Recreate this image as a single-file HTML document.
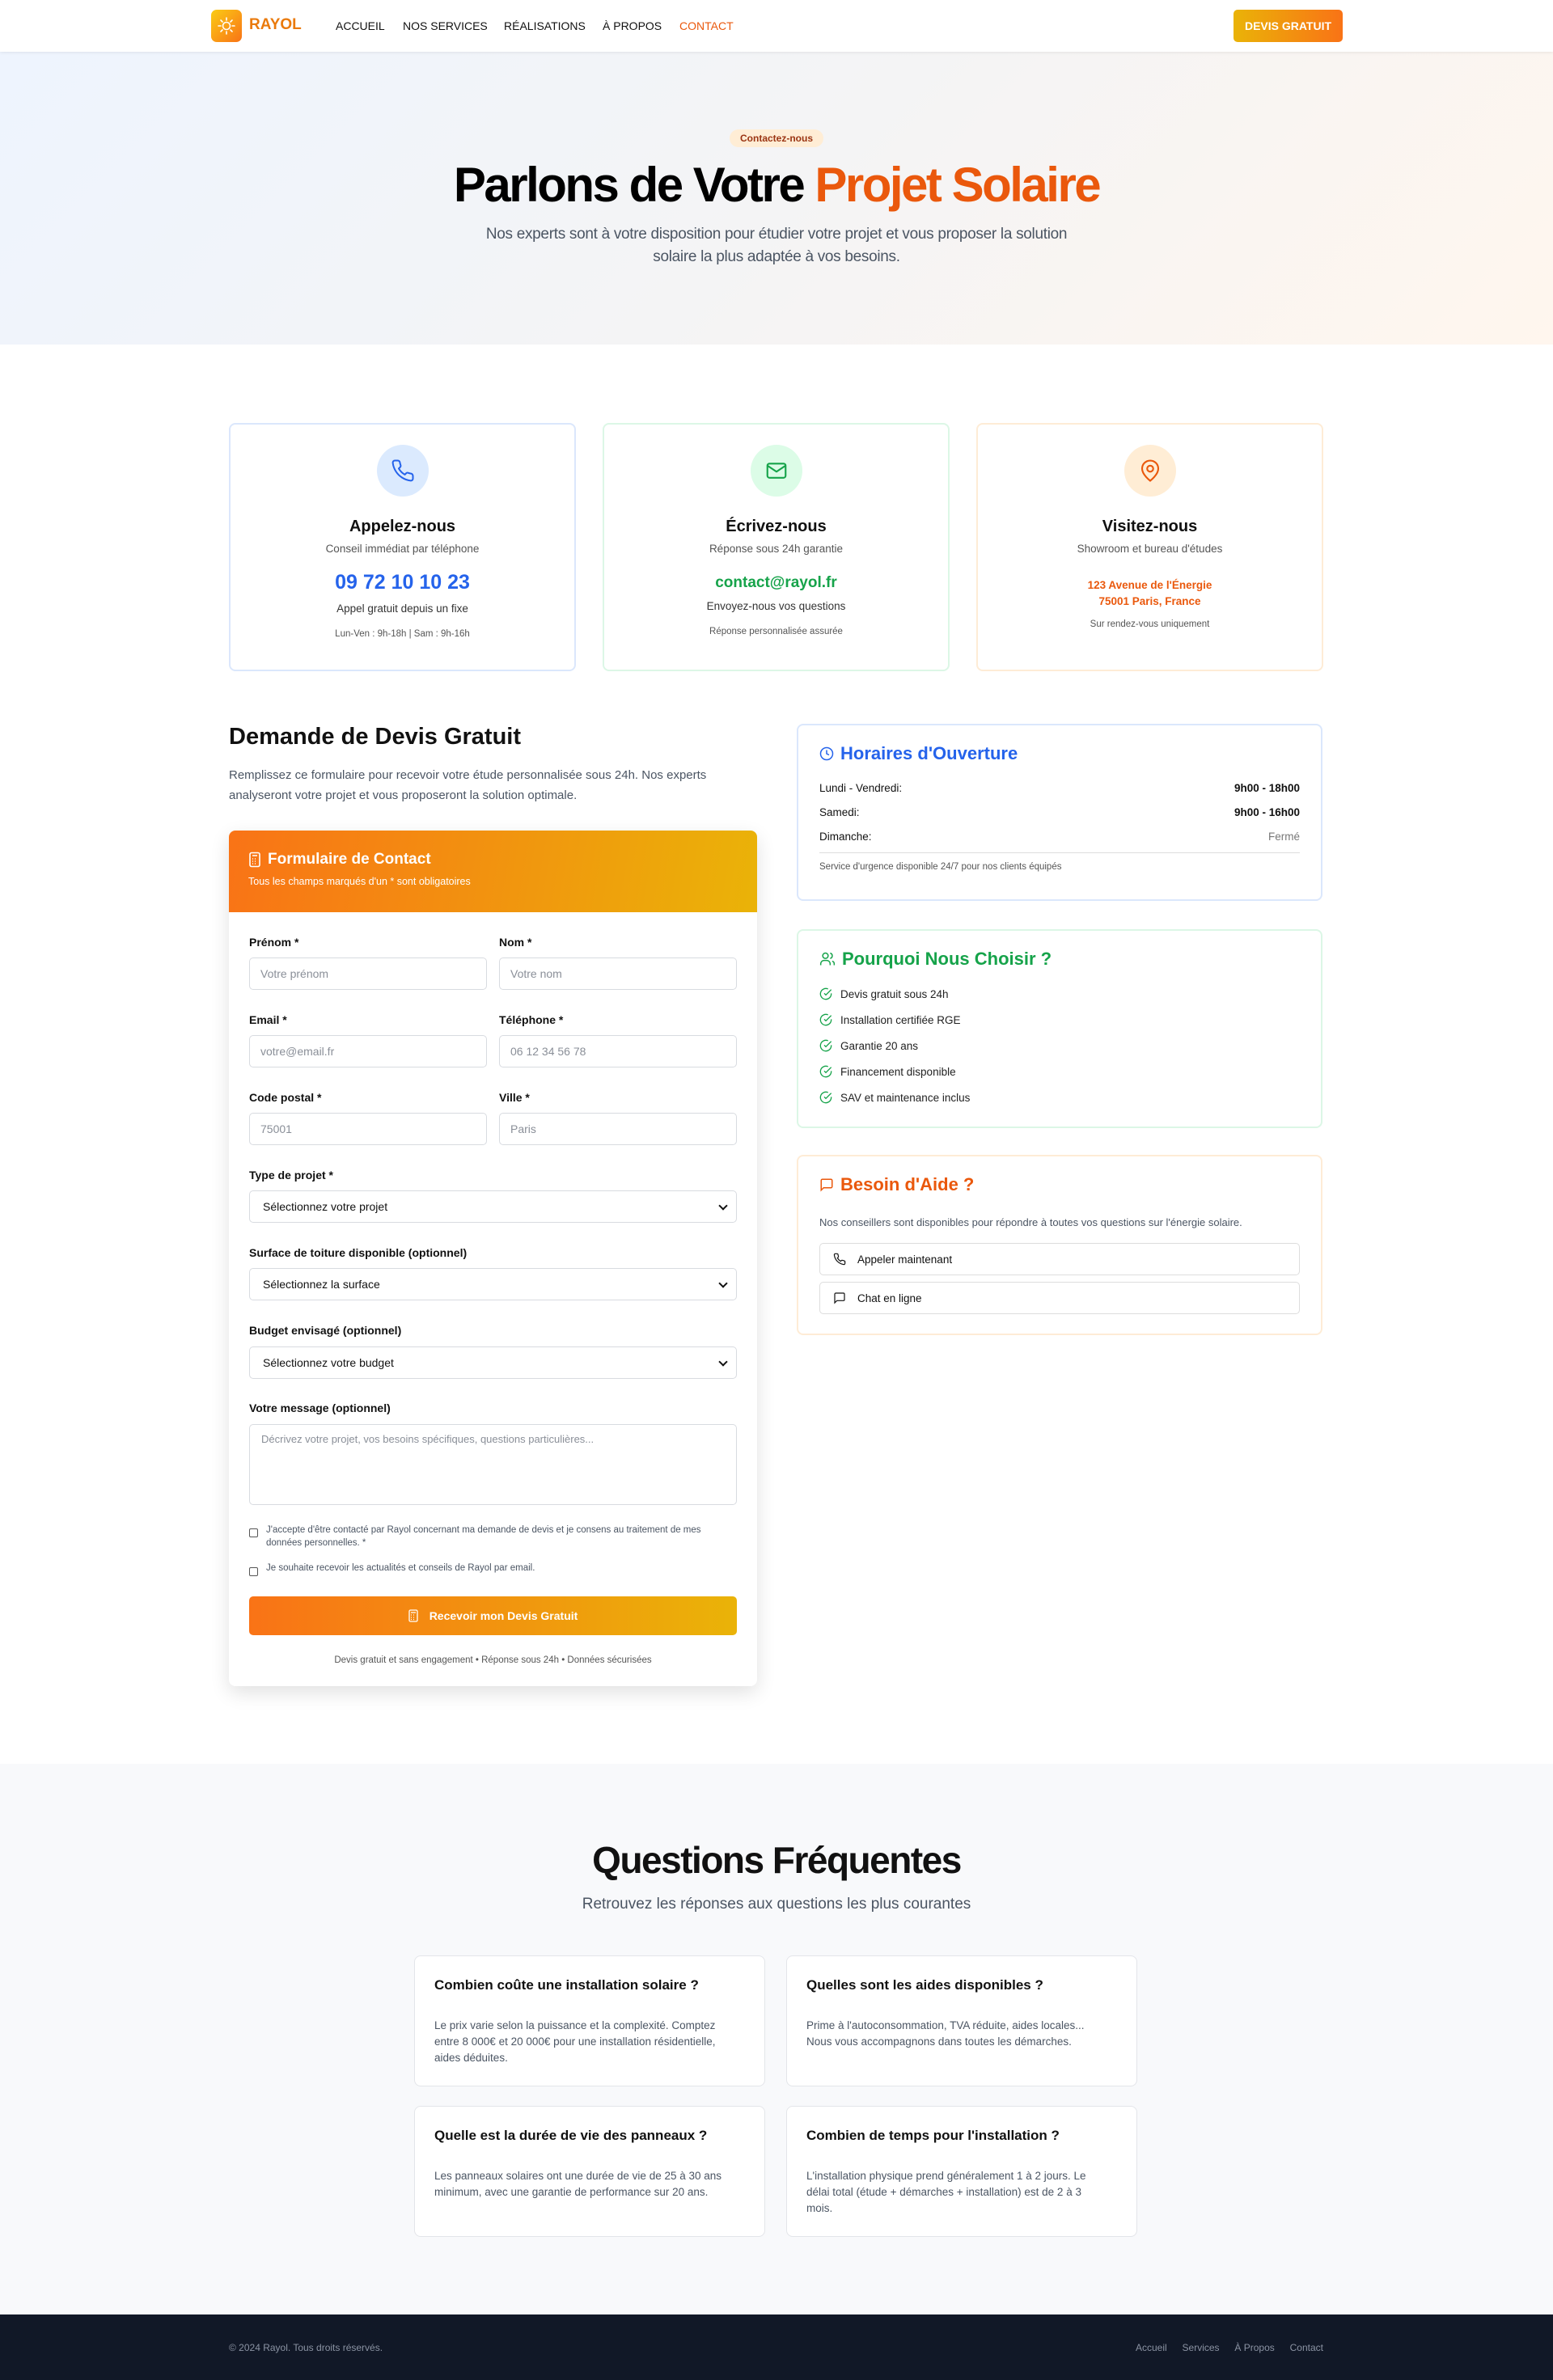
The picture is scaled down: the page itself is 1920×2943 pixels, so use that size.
<!DOCTYPE html>
<html><head><meta charset="utf-8"><style>
*{box-sizing:border-box;margin:0;padding:0}
body{width:1920px;height:2943px;position:relative;font-family:"Liberation Sans",sans-serif;color:#111;background:#fff;overflow:hidden}
.a{position:absolute}
.nav{left:0;top:0;width:1920px;height:64px;background:#fff;box-shadow:0 1px 4px rgba(0,0,0,.08);z-index:2}
.navi{top:24px;font-size:14px;font-weight:500;color:#111}
.hero{left:0;top:64px;width:1920px;height:362px;background:linear-gradient(135deg,#eef4fe 0%,#f4f4f5 50%,#fff6ee 100%)}
.c{text-align:center}
.card{border:2px solid;border-radius:8px;background:#fff}
.ic{width:64px;height:64px;border-radius:50%;display:flex;align-items:center;justify-content:center}
.lbl{font-size:14px;font-weight:600;color:#111}
.inp{height:40px;border:1px solid #d8dbe0;border-radius:5px;font-size:14px;color:#8a8f98;padding:11px 13px;background:#fff}
.sel{height:40px;border:1px solid #d8dbe0;border-radius:5px;font-size:14px;color:#111;padding:11px 16px;background:#fff}
.sel:after{content:"";position:absolute;right:12px;top:14px;width:6px;height:6px;border-right:2px solid #111;border-bottom:2px solid #111;transform:rotate(45deg)}
.rc{border:2px solid;border-radius:8px;background:#fff;left:985px;width:650px}
.faq{background:#fff;border:1px solid #e3e5e9;border-radius:8px;width:434px;height:162px;padding:26px 24px}
.faq h4{font-size:17px;font-weight:600;margin-bottom:30px}
.faq p{font-size:13.5px;line-height:20px;color:#4b5563;width:370px}
.li{font-size:13.5px;color:#222;height:32px;display:flex;align-items:center;gap:10px}
</style></head><body>
<div class="a nav">
  <div class="a" style="left:261px;top:12px;width:38px;height:40px;border-radius:7px;background:linear-gradient(135deg,#facc15,#f97316)">
    <svg width="38" height="40" viewBox="0 0 38 40"><g stroke="#fff" stroke-width="1.6" fill="none" stroke-linecap="round"><circle cx="19" cy="20" r="4.5"/><path d="M19 10v3M19 27v3M9 20h3M26 20h3M12 13l2 2M24 25l2 2M12 27l2-2M24 15l2-2"/></g></svg>
  </div>
  <div class="a" style="left:308px;top:20px;font-size:19px;font-weight:700;color:#ea7a0c">RAYOL</div>
  <div class="a navi" style="left:415px">ACCUEIL</div>
  <div class="a navi" style="left:498px">NOS SERVICES</div>
  <div class="a navi" style="left:623px">RÉALISATIONS</div>
  <div class="a navi" style="left:745px">À PROPOS</div>
  <div class="a navi" style="left:840px;color:#ea580c">CONTACT</div>
  <div class="a" style="left:1525px;top:12px;width:135px;height:40px;border-radius:5px;background:linear-gradient(90deg,#eab308,#f97316);color:#fff;font-size:14px;font-weight:700;text-align:center;line-height:40px">DEVIS GRATUIT</div>
</div>
<div class="a hero"></div>
<div class="a" style="left:902px;top:160px;width:116px;height:22px;border-radius:11px;background:#ffedd5;color:#9a3412;font-size:12px;font-weight:600;text-align:center;line-height:22px">Contactez-nous</div>
<div class="a c" style="left:0;width:1920px;top:194px;font-size:60px;font-weight:700;letter-spacing:-2.5px;color:#000">Parlons de Votre <span style="color:#ea580c">Projet Solaire</span></div>
<div class="a c" style="left:575px;width:770px;top:276px;font-size:19px;line-height:28px;color:#4b5563;letter-spacing:-0.3px">Nos experts sont à votre disposition pour étudier votre projet et vous proposer la solution solaire la plus adaptée à vos besoins.</div>

<div class="a card c" style="left:283px;top:523px;width:429px;height:307px;border-color:#dbe7fc">
  <div class="ic" style="background:#dbeafe;margin:25px auto 0"><svg width="30" height="30" viewBox="0 0 24 24" fill="none" stroke="#2563eb" stroke-width="1.6" stroke-linecap="round" stroke-linejoin="round"><path d="M22 16.9v3a2 2 0 0 1-2.2 2 19.8 19.8 0 0 1-8.6-3.1 19.5 19.5 0 0 1-6-6A19.8 19.8 0 0 1 2.1 4.2 2 2 0 0 1 4.1 2h3a2 2 0 0 1 2 1.7c.1 1 .4 1.9.7 2.8a2 2 0 0 1-.5 2.1L8 9.9a16 16 0 0 0 6 6l1.3-1.3a2 2 0 0 1 2.1-.4c.9.3 1.8.6 2.8.7a2 2 0 0 1 1.7 2z"/></svg></div>
  <div style="font-size:20px;font-weight:600;margin-top:26px">Appelez-nous</div>
  <div style="font-size:13.5px;color:#555;margin-top:8px">Conseil immédiat par téléphone</div>
  <div style="font-size:25px;font-weight:700;color:#2563eb;margin-top:20px">09 72 10 10 23</div>
  <div style="font-size:13.5px;color:#333;margin-top:10px">Appel gratuit depuis un fixe</div>
  <div style="font-size:11.5px;color:#555;margin-top:18px">Lun-Ven : 9h-18h | Sam : 9h-16h</div>
</div>
<div class="a card c" style="left:745px;top:523px;width:429px;height:307px;border-color:#dcf7e6">
  <div class="ic" style="background:#dcfce7;margin:25px auto 0"><svg width="30" height="30" viewBox="0 0 24 24" fill="none" stroke="#16a34a" stroke-width="1.7" stroke-linejoin="round"><rect x="3" y="5" width="18" height="14" rx="2"/><path d="M3 7l9 6 9-6"/></svg></div>
  <div style="font-size:20px;font-weight:600;margin-top:26px">Écrivez-nous</div>
  <div style="font-size:13.5px;color:#555;margin-top:8px">Réponse sous 24h garantie</div>
  <div style="font-size:19px;font-weight:600;color:#16a34a;margin-top:24px">contact@rayol.fr</div>
  <div style="font-size:13.5px;color:#333;margin-top:10px">Envoyez-nous vos questions</div>
  <div style="font-size:11.5px;color:#555;margin-top:18px">Réponse personnalisée assurée</div>
</div>
<div class="a card c" style="left:1207px;top:523px;width:429px;height:307px;border-color:#feecd6">
  <div class="ic" style="background:#ffedd5;margin:25px auto 0"><svg width="30" height="30" viewBox="0 0 24 24" fill="none" stroke="#ea580c" stroke-width="1.7"><path d="M20 10c0 6-8 12-8 12S4 16 4 10a8 8 0 0 1 16 0z"/><circle cx="12" cy="10" r="3"/></svg></div>
  <div style="font-size:20px;font-weight:600;margin-top:26px">Visitez-nous</div>
  <div style="font-size:13.5px;color:#555;margin-top:8px">Showroom et bureau d'études</div>
  <div style="font-size:13.5px;font-weight:600;color:#ea580c;margin-top:28px;line-height:20px">123 Avenue de l'Énergie<br>75001 Paris, France</div>
  <div style="font-size:11.5px;color:#555;margin-top:12px">Sur rendez-vous uniquement</div>
</div>

<div class="a" style="left:283px;top:895px;font-size:29px;font-weight:700">Demande de Devis Gratuit</div>
<div class="a" style="left:283px;top:946px;width:600px;font-size:15px;line-height:25px;color:#4b5563">Remplissez ce formulaire pour recevoir votre étude personnalisée sous 24h. Nos experts analyseront votre projet et vous proposeront la solution optimale.</div>
<div class="a" style="left:283px;top:1027px;width:653px;height:1058px;border-radius:8px;background:#fff;box-shadow:0 8px 24px rgba(0,0,0,.12);overflow:hidden">
  <div style="height:101px;background:linear-gradient(100deg,#f97316,#eab308);padding:25px 24px;color:#fff">
    <div style="font-size:19px;font-weight:700;display:flex;align-items:center;gap:8px"><svg width="16" height="20" viewBox="0 0 16 20" fill="none" stroke="#fff" stroke-width="1.6"><rect x="2" y="1.5" width="12" height="17" rx="2"/><path d="M5 5h6M5 9h1M8 9h1M5 12h1M8 12h1M5 15h1M8 15h1"/></svg>Formulaire de Contact</div>
    <div style="font-size:12.5px;margin-top:9px">Tous les champs marqués d'un * sont obligatoires</div>
  </div>
</div>
<div class="a lbl" style="left:308px;top:1157px">Prénom *</div><div class="a lbl" style="left:617px;top:1157px">Nom *</div>
<div class="a inp" style="left:308px;top:1184px;width:294px">Votre prénom</div><div class="a inp" style="left:617px;top:1184px;width:294px">Votre nom</div>
<div class="a lbl" style="left:308px;top:1253px">Email *</div><div class="a lbl" style="left:617px;top:1253px">Téléphone *</div>
<div class="a inp" style="left:308px;top:1280px;width:294px">votre@email.fr</div><div class="a inp" style="left:617px;top:1280px;width:294px">06 12 34 56 78</div>
<div class="a lbl" style="left:308px;top:1349px">Code postal *</div><div class="a lbl" style="left:617px;top:1349px">Ville *</div>
<div class="a inp" style="left:308px;top:1376px;width:294px">75001</div><div class="a inp" style="left:617px;top:1376px;width:294px">Paris</div>
<div class="a lbl" style="left:308px;top:1445px">Type de projet *</div>
<div class="a sel" style="left:308px;top:1472px;width:603px">Sélectionnez votre projet</div>
<div class="a lbl" style="left:308px;top:1541px">Surface de toiture disponible (optionnel)</div>
<div class="a sel" style="left:308px;top:1568px;width:603px">Sélectionnez la surface</div>
<div class="a lbl" style="left:308px;top:1637px">Budget envisagé (optionnel)</div>
<div class="a sel" style="left:308px;top:1665px;width:603px">Sélectionnez votre budget</div>
<div class="a lbl" style="left:308px;top:1733px">Votre message (optionnel)</div>
<div class="a inp" style="left:308px;top:1761px;width:603px;height:100px;padding:10px 14px;font-size:13px">Décrivez votre projet, vos besoins spécifiques, questions particulières...</div>
<div class="a" style="left:308px;top:1890px;width:11px;height:11px;border:1px solid #555;border-radius:2px"></div>
<div class="a" style="left:329px;top:1884px;width:560px;font-size:11.5px;line-height:16px;color:#4b5563">J'accepte d'être contacté par Rayol concernant ma demande de devis et je consens au traitement de mes données personnelles. *</div>
<div class="a" style="left:308px;top:1938px;width:11px;height:11px;border:1px solid #555;border-radius:2px"></div>
<div class="a" style="left:329px;top:1933px;font-size:11.5px;color:#4b5563">Je souhaite recevoir les actualités et conseils de Rayol par email.</div>
<div class="a" style="left:308px;top:1974px;width:603px;height:48px;border-radius:5px;background:linear-gradient(90deg,#f97316,#eab308);color:#fff;font-size:14px;font-weight:700;display:flex;align-items:center;justify-content:center;gap:14px"><svg width="12" height="16" viewBox="0 0 12 16" fill="none" stroke="#fff" stroke-width="1.3"><rect x="1" y="1" width="10" height="14" rx="1.5"/><path d="M3 4h6M3 7h1M6 7h1M3 10h1M6 10h1M3 12.5h1M6 12.5h1"/></svg>Recevoir mon Devis Gratuit</div>
<div class="a c" style="left:283px;width:653px;top:2047px;font-size:11.5px;color:#555">Devis gratuit et sans engagement • Réponse sous 24h • Données sécurisées</div>

<div class="a rc" style="top:895px;height:219px;border-color:#dbe7fc;padding:22px 26px">
  <div style="font-size:22px;font-weight:600;color:#2563eb;display:flex;align-items:center;gap:8px"><svg width="18" height="18" viewBox="0 0 24 24" fill="none" stroke="#2563eb" stroke-width="2"><circle cx="12" cy="12" r="10"/><path d="M12 6v6l4 2"/></svg>Horaires d'Ouverture</div>
  <div style="display:flex;justify-content:space-between;font-size:13.5px;margin-top:22px"><span>Lundi - Vendredi:</span><b style="font-weight:600">9h00 - 18h00</b></div>
  <div style="display:flex;justify-content:space-between;font-size:13.5px;margin-top:15px"><span>Samedi:</span><b style="font-weight:600">9h00 - 16h00</b></div>
  <div style="display:flex;justify-content:space-between;font-size:13.5px;margin-top:15px"><span>Dimanche:</span><span style="color:#777">Fermé</span></div>
  <div style="border-top:1px solid #ddd;margin-top:12px;padding-top:11px;font-size:11.5px;color:#555">Service d'urgence disponible 24/7 pour nos clients équipés</div>
</div>
<div class="a rc" style="top:1149px;height:246px;border-color:#dcf7e6;padding:22px 26px">
  <div style="font-size:22px;font-weight:600;color:#16a34a;display:flex;align-items:center;gap:8px;margin-bottom:14px"><svg width="20" height="20" viewBox="0 0 24 24" fill="none" stroke="#16a34a" stroke-width="1.8"><circle cx="9" cy="7" r="4"/><path d="M2 21v-2a5 5 0 0 1 5-5h4a5 5 0 0 1 5 5v2M16 3.1a4 4 0 0 1 0 7.8M22 21v-2a4 4 0 0 0-3-3.9"/></svg>Pourquoi Nous Choisir ?</div>
  <div class="li"><svg width="16" height="16" viewBox="0 0 24 24" fill="none" stroke="#16a34a" stroke-width="2"><path d="M22 11.1V12a10 10 0 1 1-5.9-9.1"/><path d="M22 4L12 14l-3-3"/></svg>Devis gratuit sous 24h</div>
  <div class="li"><svg width="16" height="16" viewBox="0 0 24 24" fill="none" stroke="#16a34a" stroke-width="2"><path d="M22 11.1V12a10 10 0 1 1-5.9-9.1"/><path d="M22 4L12 14l-3-3"/></svg>Installation certifiée RGE</div>
  <div class="li"><svg width="16" height="16" viewBox="0 0 24 24" fill="none" stroke="#16a34a" stroke-width="2"><path d="M22 11.1V12a10 10 0 1 1-5.9-9.1"/><path d="M22 4L12 14l-3-3"/></svg>Garantie 20 ans</div>
  <div class="li"><svg width="16" height="16" viewBox="0 0 24 24" fill="none" stroke="#16a34a" stroke-width="2"><path d="M22 11.1V12a10 10 0 1 1-5.9-9.1"/><path d="M22 4L12 14l-3-3"/></svg>Financement disponible</div>
  <div class="li"><svg width="16" height="16" viewBox="0 0 24 24" fill="none" stroke="#16a34a" stroke-width="2"><path d="M22 11.1V12a10 10 0 1 1-5.9-9.1"/><path d="M22 4L12 14l-3-3"/></svg>SAV et maintenance inclus</div>
</div>
<div class="a rc" style="top:1428px;height:223px;border-color:#feecd6;padding:22px 26px">
  <div style="font-size:22px;font-weight:600;color:#ea580c;display:flex;align-items:center;gap:8px"><svg width="18" height="18" viewBox="0 0 24 24" fill="none" stroke="#ea580c" stroke-width="2"><path d="M21 15a2 2 0 0 1-2 2H7l-4 4V5a2 2 0 0 1 2-2h14a2 2 0 0 1 2 2z"/></svg>Besoin d'Aide ?</div>
  <div style="font-size:13px;color:#4b5563;margin-top:26px">Nos conseillers sont disponibles pour répondre à toutes vos questions sur l'énergie solaire.</div>
  <div style="margin-top:18px;height:40px;border:1px solid #ddd;border-radius:5px;display:flex;align-items:center;padding-left:16px;gap:14px;font-size:13.5px;font-weight:500"><svg width="16" height="16" viewBox="0 0 24 24" fill="none" stroke="#111" stroke-width="1.8"><path d="M22 16.9v3a2 2 0 0 1-2.2 2 19.8 19.8 0 0 1-8.6-3.1 19.5 19.5 0 0 1-6-6A19.8 19.8 0 0 1 2.1 4.2 2 2 0 0 1 4.1 2h3a2 2 0 0 1 2 1.7c.1 1 .4 1.9.7 2.8a2 2 0 0 1-.5 2.1L8 9.9a16 16 0 0 0 6 6l1.3-1.3a2 2 0 0 1 2.1-.4c.9.3 1.8.6 2.8.7a2 2 0 0 1 1.7 2z"/></svg>Appeler maintenant</div>
  <div style="margin-top:8px;height:40px;border:1px solid #ddd;border-radius:5px;display:flex;align-items:center;padding-left:16px;gap:14px;font-size:13.5px;font-weight:500"><svg width="16" height="16" viewBox="0 0 24 24" fill="none" stroke="#111" stroke-width="1.8"><path d="M21 15a2 2 0 0 1-2 2H7l-4 4V5a2 2 0 0 1 2-2h14a2 2 0 0 1 2 2z"/></svg>Chat en ligne</div>
</div>

<div class="a" style="left:0;top:2181px;width:1920px;height:681px;background:#f8f9fb"></div>
<div class="a c" style="left:0;width:1920px;top:2273px;font-size:46px;font-weight:700;letter-spacing:-1.5px">Questions Fréquentes</div>
<div class="a c" style="left:0;width:1920px;top:2344px;font-size:19px;color:#4b5563">Retrouvez les réponses aux questions les plus courantes</div>
<div class="a faq" style="left:512px;top:2418px"><h4>Combien coûte une installation solaire ?</h4><p>Le prix varie selon la puissance et la complexité. Comptez entre 8 000€ et 20 000€ pour une installation résidentielle, aides déduites.</p></div>
<div class="a faq" style="left:972px;top:2418px"><h4>Quelles sont les aides disponibles ?</h4><p>Prime à l'autoconsommation, TVA réduite, aides locales... Nous vous accompagnons dans toutes les démarches.</p></div>
<div class="a faq" style="left:512px;top:2604px"><h4>Quelle est la durée de vie des panneaux ?</h4><p>Les panneaux solaires ont une durée de vie de 25 à 30 ans minimum, avec une garantie de performance sur 20 ans.</p></div>
<div class="a faq" style="left:972px;top:2604px"><h4>Combien de temps pour l'installation ?</h4><p>L'installation physique prend généralement 1 à 2 jours. Le délai total (étude + démarches + installation) est de 2 à 3 mois.</p></div>

<div class="a" style="left:0;top:2862px;width:1920px;height:81px;background:#111827"></div>
<div class="a" style="left:283px;top:2896px;font-size:12px;color:#8b93a3">© 2024 Rayol. Tous droits réservés.</div>
<div class="a" style="left:1404px;top:2896px;width:232px;font-size:12px;color:#8b93a3;display:flex;justify-content:space-between"><span>Accueil</span><span>Services</span><span>À Propos</span><span>Contact</span></div>
</body></html>
